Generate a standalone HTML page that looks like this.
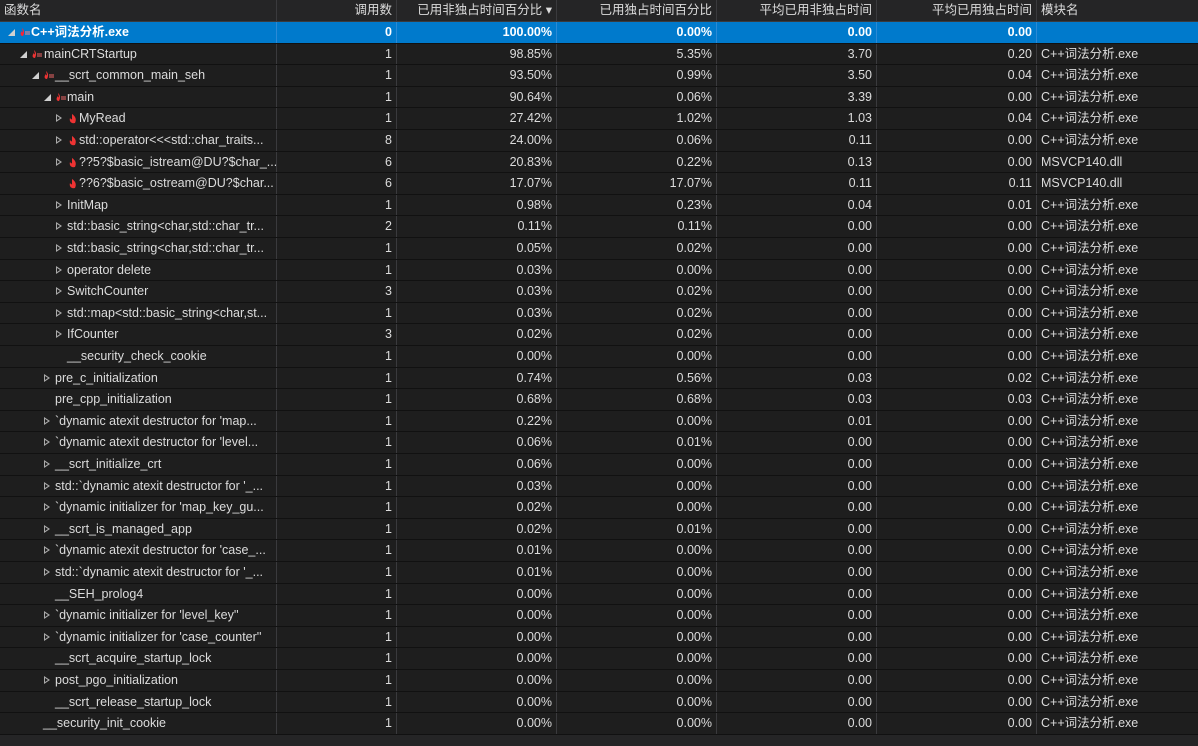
<!DOCTYPE html>
<html><head><meta charset="utf-8"><style>
*{box-sizing:border-box;margin:0;padding:0}
body{width:1198px;height:746px;background:#252526;font-family:"Liberation Sans","Noto Sans CJK SC",sans-serif;font-size:12.5px;color:#dcdcdc;overflow:hidden;position:relative}
.r{position:absolute;left:0;width:1198px;height:21.6px;display:flex;background:#1e1e1e;border-bottom:1px solid #111}
.r>div{height:100%;border-right:1px solid #3a3a3d;line-height:20.6px;white-space:nowrap;overflow:hidden}
.a{width:277px;position:relative}
.b{width:120px;text-align:right;padding-right:4px}
.c,.d,.e,.f{width:160px;text-align:right;padding-right:4px}
.g{width:161px;padding-left:4px;border-right:none!important}
.h{background:#252526;border-bottom:1px solid #3a3a3d}
.h>div{text-align:right}
.h .a,.h .g{text-align:left;padding-left:4px}
.s{background:#007acc;color:#fff;font-weight:bold}
.s>div{border-right-color:#2b8ad6}
.t{position:absolute;top:0}
.o::before{content:"";position:absolute;left:0;top:7px;border-left:7px solid transparent;border-bottom:7px solid #d0d0d0}
.cl::before{content:"";position:absolute;left:1px;top:6px;width:0;height:0;border-top:4.5px solid transparent;border-bottom:4.5px solid transparent;border-left:6px solid #aaa}
.cl::after{content:"";position:absolute;left:2px;top:8px;border-top:2.5px solid transparent;border-bottom:2.5px solid transparent;border-left:3.5px solid #1e1e1e}
.x{position:absolute;width:10px;height:20px}
svg{position:absolute;top:5px}
</style></head><body>
<div class="r h" style="top:0;height:22px"><div class="a">函数名</div><div class="b">调用数</div><div class="c">已用非独占时间百分比 ▾</div><div class="d">已用独占时间百分比</div><div class="e">平均已用非独占时间</div><div class="f">平均已用独占时间</div><div class="g">模块名</div></div>

<div class="r s" style="top:22px"><div class="a"><span class="x o" style="left:8px"></span><svg style="left:19px" width="12" height="10"><path d="M3 1c2 2 3 4 1 8c-3 0-3-3-1-5c0 1 1 2 1 1z" fill="#f23"/><path d="M6 5h5M6 7h5" stroke="#f88" stroke-width="1"/></svg><span class="t" style="left:31px">C++词法分析.exe</span></div><div class="b">0</div><div class="c">100.00%</div><div class="d">0.00%</div><div class="e">0.00</div><div class="f">0.00</div><div class="g"></div></div>

<div class="r" style="top:43.6px"><div class="a"><span class="x o" style="left:20px"></span><svg style="left:31px" width="12" height="10"><path d="M3 1c2 2 3 4 1 8c-3 0-3-3-1-5c0 1 1 2 1 1z" fill="#e33"/><path d="M6 5h5M6 7h5" stroke="#e66"/></svg><span class="t" style="left:44px">mainCRTStartup</span></div><div class="b">1</div><div class="c">98.85%</div><div class="d">5.35%</div><div class="e">3.70</div><div class="f">0.20</div><div class="g">C++词法分析.exe</div></div>

<div class="r" style="top:65.2px"><div class="a"><span class="x o" style="left:32px"></span><svg style="left:43px" width="12" height="10"><path d="M3 1c2 2 3 4 1 8c-3 0-3-3-1-5c0 1 1 2 1 1z" fill="#e33"/><path d="M6 5h5M6 7h5" stroke="#e66"/></svg><span class="t" style="left:55px">__scrt_common_main_seh</span></div><div class="b">1</div><div class="c">93.50%</div><div class="d">0.99%</div><div class="e">3.50</div><div class="f">0.04</div><div class="g">C++词法分析.exe</div></div>

<div class="r" style="top:86.8px"><div class="a"><span class="x o" style="left:44px"></span><svg style="left:55px" width="12" height="10"><path d="M3 1c2 2 3 4 1 8c-3 0-3-3-1-5c0 1 1 2 1 1z" fill="#e33"/><path d="M6 5h5M6 7h5" stroke="#e66"/></svg><span class="t" style="left:67px">main</span></div><div class="b">1</div><div class="c">90.64%</div><div class="d">0.06%</div><div class="e">3.39</div><div class="f">0.00</div><div class="g">C++词法分析.exe</div></div>

<div class="r" style="top:108.4px"><div class="a"><span class="x cl" style="left:55px"></span><svg style="left:68px" width="10" height="11"><path d="M4 1c3 2 5 5 3 9c-4 1-6-2-5-5c1 1 1 2 2 1z" fill="#e33"/></svg><span class="t" style="left:79px">MyRead</span></div><div class="b">1</div><div class="c">27.42%</div><div class="d">1.02%</div><div class="e">1.03</div><div class="f">0.04</div><div class="g">C++词法分析.exe</div></div>

<div class="r" style="top:130px"><div class="a"><span class="x cl" style="left:55px"></span><svg style="left:68px" width="10" height="11"><path d="M4 1c3 2 5 5 3 9c-4 1-6-2-5-5c1 1 1 2 2 1z" fill="#e33"/></svg><span class="t" style="left:79px">std::operator&lt;&lt;&lt;std::char_traits...</span></div><div class="b">8</div><div class="c">24.00%</div><div class="d">0.06%</div><div class="e">0.11</div><div class="f">0.00</div><div class="g">C++词法分析.exe</div></div>

<div class="r" style="top:151.6px"><div class="a"><span class="x cl" style="left:55px"></span><svg style="left:68px" width="10" height="11"><path d="M4 1c3 2 5 5 3 9c-4 1-6-2-5-5c1 1 1 2 2 1z" fill="#e33"/></svg><span class="t" style="left:79px">??5?$basic_istream@DU?$char_...</span></div><div class="b">6</div><div class="c">20.83%</div><div class="d">0.22%</div><div class="e">0.13</div><div class="f">0.00</div><div class="g">MSVCP140.dll</div></div>

<div class="r" style="top:173.2px"><div class="a"><svg style="left:68px" width="10" height="11"><path d="M4 1c3 2 5 5 3 9c-4 1-6-2-5-5c1 1 1 2 2 1z" fill="#e33"/></svg><span class="t" style="left:79px">??6?$basic_ostream@DU?$char...</span></div><div class="b">6</div><div class="c">17.07%</div><div class="d">17.07%</div><div class="e">0.11</div><div class="f">0.11</div><div class="g">MSVCP140.dll</div></div>

<div class="r" style="top:194.8px"><div class="a"><span class="x cl" style="left:55px"></span><span class="t" style="left:67px">InitMap</span></div><div class="b">1</div><div class="c">0.98%</div><div class="d">0.23%</div><div class="e">0.04</div><div class="f">0.01</div><div class="g">C++词法分析.exe</div></div>

<div class="r" style="top:216.4px"><div class="a"><span class="x cl" style="left:55px"></span><span class="t" style="left:67px">std::basic_string&lt;char,std::char_tr...</span></div><div class="b">2</div><div class="c">0.11%</div><div class="d">0.11%</div><div class="e">0.00</div><div class="f">0.00</div><div class="g">C++词法分析.exe</div></div>

<div class="r" style="top:238px"><div class="a"><span class="x cl" style="left:55px"></span><span class="t" style="left:67px">std::basic_string&lt;char,std::char_tr...</span></div><div class="b">1</div><div class="c">0.05%</div><div class="d">0.02%</div><div class="e">0.00</div><div class="f">0.00</div><div class="g">C++词法分析.exe</div></div>

<div class="r" style="top:259.6px"><div class="a"><span class="x cl" style="left:55px"></span><span class="t" style="left:67px">operator delete</span></div><div class="b">1</div><div class="c">0.03%</div><div class="d">0.00%</div><div class="e">0.00</div><div class="f">0.00</div><div class="g">C++词法分析.exe</div></div>

<div class="r" style="top:281.2px"><div class="a"><span class="x cl" style="left:55px"></span><span class="t" style="left:67px">SwitchCounter</span></div><div class="b">3</div><div class="c">0.03%</div><div class="d">0.02%</div><div class="e">0.00</div><div class="f">0.00</div><div class="g">C++词法分析.exe</div></div>

<div class="r" style="top:302.8px"><div class="a"><span class="x cl" style="left:55px"></span><span class="t" style="left:67px">std::map&lt;std::basic_string&lt;char,st...</span></div><div class="b">1</div><div class="c">0.03%</div><div class="d">0.02%</div><div class="e">0.00</div><div class="f">0.00</div><div class="g">C++词法分析.exe</div></div>

<div class="r" style="top:324.4px"><div class="a"><span class="x cl" style="left:55px"></span><span class="t" style="left:67px">IfCounter</span></div><div class="b">3</div><div class="c">0.02%</div><div class="d">0.02%</div><div class="e">0.00</div><div class="f">0.00</div><div class="g">C++词法分析.exe</div></div>

<div class="r" style="top:346px"><div class="a"><span class="t" style="left:67px">__security_check_cookie</span></div><div class="b">1</div><div class="c">0.00%</div><div class="d">0.00%</div><div class="e">0.00</div><div class="f">0.00</div><div class="g">C++词法分析.exe</div></div>

<div class="r" style="top:367.6px"><div class="a"><span class="x cl" style="left:43px"></span><span class="t" style="left:55px">pre_c_initialization</span></div><div class="b">1</div><div class="c">0.74%</div><div class="d">0.56%</div><div class="e">0.03</div><div class="f">0.02</div><div class="g">C++词法分析.exe</div></div>

<div class="r" style="top:389.2px"><div class="a"><span class="t" style="left:55px">pre_cpp_initialization</span></div><div class="b">1</div><div class="c">0.68%</div><div class="d">0.68%</div><div class="e">0.03</div><div class="f">0.03</div><div class="g">C++词法分析.exe</div></div>

<div class="r" style="top:410.8px"><div class="a"><span class="x cl" style="left:43px"></span><span class="t" style="left:55px">`dynamic atexit destructor for 'map...</span></div><div class="b">1</div><div class="c">0.22%</div><div class="d">0.00%</div><div class="e">0.01</div><div class="f">0.00</div><div class="g">C++词法分析.exe</div></div>

<div class="r" style="top:432.4px"><div class="a"><span class="x cl" style="left:43px"></span><span class="t" style="left:55px">`dynamic atexit destructor for 'level...</span></div><div class="b">1</div><div class="c">0.06%</div><div class="d">0.01%</div><div class="e">0.00</div><div class="f">0.00</div><div class="g">C++词法分析.exe</div></div>

<div class="r" style="top:454px"><div class="a"><span class="x cl" style="left:43px"></span><span class="t" style="left:55px">__scrt_initialize_crt</span></div><div class="b">1</div><div class="c">0.06%</div><div class="d">0.00%</div><div class="e">0.00</div><div class="f">0.00</div><div class="g">C++词法分析.exe</div></div>

<div class="r" style="top:475.6px"><div class="a"><span class="x cl" style="left:43px"></span><span class="t" style="left:55px">std::`dynamic atexit destructor for '_...</span></div><div class="b">1</div><div class="c">0.03%</div><div class="d">0.00%</div><div class="e">0.00</div><div class="f">0.00</div><div class="g">C++词法分析.exe</div></div>

<div class="r" style="top:497.2px"><div class="a"><span class="x cl" style="left:43px"></span><span class="t" style="left:55px">`dynamic initializer for 'map_key_gu...</span></div><div class="b">1</div><div class="c">0.02%</div><div class="d">0.00%</div><div class="e">0.00</div><div class="f">0.00</div><div class="g">C++词法分析.exe</div></div>

<div class="r" style="top:518.8px"><div class="a"><span class="x cl" style="left:43px"></span><span class="t" style="left:55px">__scrt_is_managed_app</span></div><div class="b">1</div><div class="c">0.02%</div><div class="d">0.01%</div><div class="e">0.00</div><div class="f">0.00</div><div class="g">C++词法分析.exe</div></div>

<div class="r" style="top:540.4px"><div class="a"><span class="x cl" style="left:43px"></span><span class="t" style="left:55px">`dynamic atexit destructor for 'case_...</span></div><div class="b">1</div><div class="c">0.01%</div><div class="d">0.00%</div><div class="e">0.00</div><div class="f">0.00</div><div class="g">C++词法分析.exe</div></div>

<div class="r" style="top:562px"><div class="a"><span class="x cl" style="left:43px"></span><span class="t" style="left:55px">std::`dynamic atexit destructor for '_...</span></div><div class="b">1</div><div class="c">0.01%</div><div class="d">0.00%</div><div class="e">0.00</div><div class="f">0.00</div><div class="g">C++词法分析.exe</div></div>

<div class="r" style="top:583.6px"><div class="a"><span class="t" style="left:55px">__SEH_prolog4</span></div><div class="b">1</div><div class="c">0.00%</div><div class="d">0.00%</div><div class="e">0.00</div><div class="f">0.00</div><div class="g">C++词法分析.exe</div></div>

<div class="r" style="top:605.2px"><div class="a"><span class="x cl" style="left:43px"></span><span class="t" style="left:55px">`dynamic initializer for 'level_key''</span></div><div class="b">1</div><div class="c">0.00%</div><div class="d">0.00%</div><div class="e">0.00</div><div class="f">0.00</div><div class="g">C++词法分析.exe</div></div>

<div class="r" style="top:626.8px"><div class="a"><span class="x cl" style="left:43px"></span><span class="t" style="left:55px">`dynamic initializer for 'case_counter''</span></div><div class="b">1</div><div class="c">0.00%</div><div class="d">0.00%</div><div class="e">0.00</div><div class="f">0.00</div><div class="g">C++词法分析.exe</div></div>

<div class="r" style="top:648.4px"><div class="a"><span class="t" style="left:55px">__scrt_acquire_startup_lock</span></div><div class="b">1</div><div class="c">0.00%</div><div class="d">0.00%</div><div class="e">0.00</div><div class="f">0.00</div><div class="g">C++词法分析.exe</div></div>

<div class="r" style="top:670px"><div class="a"><span class="x cl" style="left:43px"></span><span class="t" style="left:55px">post_pgo_initialization</span></div><div class="b">1</div><div class="c">0.00%</div><div class="d">0.00%</div><div class="e">0.00</div><div class="f">0.00</div><div class="g">C++词法分析.exe</div></div>

<div class="r" style="top:691.6px"><div class="a"><span class="t" style="left:55px">__scrt_release_startup_lock</span></div><div class="b">1</div><div class="c">0.00%</div><div class="d">0.00%</div><div class="e">0.00</div><div class="f">0.00</div><div class="g">C++词法分析.exe</div></div>

<div class="r" style="top:713.2px"><div class="a"><span class="t" style="left:43px">__security_init_cookie</span></div><div class="b">1</div><div class="c">0.00%</div><div class="d">0.00%</div><div class="e">0.00</div><div class="f">0.00</div><div class="g">C++词法分析.exe</div></div>
</body></html>
